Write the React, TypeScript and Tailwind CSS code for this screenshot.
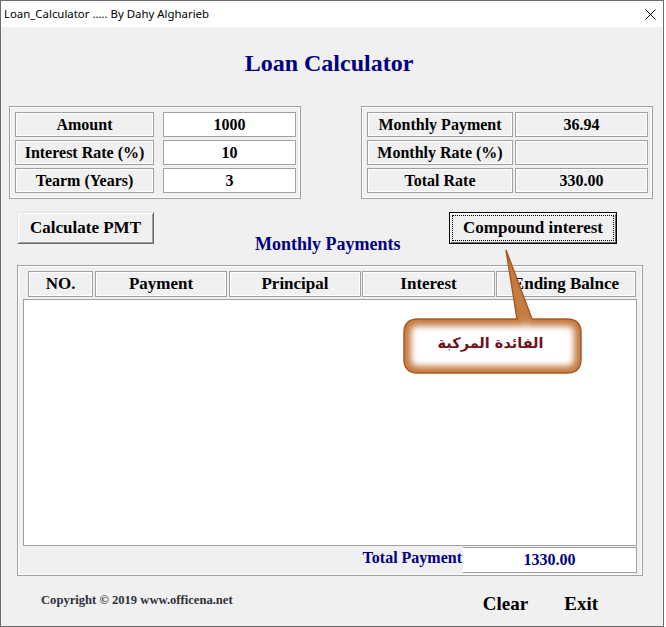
import React from "react";

const serif = { fontFamily: '"Liberation Serif", "Times New Roman", serif' };

function LabelCell({ text, w }: { text: string; w: string }) {
  return (
    <div
      className={`${w} h-[25px] flex items-center justify-center border border-[#a0a0a0] bg-[#f0f0f0] shadow-[inset_0_0_0_1px_#ffffff] text-[16px] font-bold text-black`}
    >
      {text}
    </div>
  );
}

function ValueCell({ text, white }: { text: string; white?: boolean }) {
  return (
    <div
      className={`w-[133px] h-[25px] flex items-center justify-center border border-[#a0a0a0] text-[16px] font-bold text-black ${
        white ? "bg-white" : "bg-[#f0f0f0] shadow-[inset_0_0_0_1px_#ffffff]"
      }`}
    >
      {text}
    </div>
  );
}

function Callout() {
  const d =
    "M 18 74 H 117 L 106 5 L 132 74 H 167 Q 181 74 181 88 V 114 Q 181 128 167 128 H 18 Q 4 128 4 114 V 88 Q 4 74 18 74 Z";
  return (
    <div className="absolute left-[400px] top-[245px] w-[190px] h-[135px]">
      <svg width="190" height="135" viewBox="0 0 190 135">
        <defs>
          <clipPath id="bubble">
            <path d={d} />
          </clipPath>
          <filter id="soft" x="-20%" y="-20%" width="140%" height="140%">
            <feGaussianBlur stdDeviation="3" />
          </filter>
        </defs>
        <path d={d} fill="#ffffff" />
        <g clipPath="url(#bubble)">
          <path d={d} fill="none" stroke="#c47c42" strokeWidth="14" filter="url(#soft)" />
        </g>
        <path d={d} fill="none" stroke="#a8591f" strokeWidth="1.5" />
      </svg>
      <div
        dir="rtl"
        className="absolute left-[2px] top-[72px] w-[177px] h-[54px] flex items-center justify-center text-[14.5px] font-bold text-[#74101c]"
        style={{ fontFamily: '"DejaVu Sans", "Noto Sans", sans-serif' }}
      >
        الفائدة المركبة
      </div>
    </div>
  );
}

export default function App() {
  const headers: { label: string; cls: string }[] = [
    { label: "NO.", cls: "w-[65px] ml-[5px]" },
    { label: "Payment", cls: "w-[132px] ml-[2px]" },
    { label: "Principal", cls: "w-[132px] ml-[2px]" },
    { label: "Interest", cls: "w-[133px] ml-[1px]" },
    { label: "Ending Balnce", cls: "w-[140px] ml-[1px]" },
  ];

  return (
    <div className="relative w-[666px] h-[627px] bg-white" style={serif}>
      <div className="w-[664px] h-[627px] border border-[#6b6b6b] bg-[#f0f0f0] flex flex-col">
        {/* title bar */}
        <div className="h-[26px] bg-white flex items-center justify-between pl-[3px] pr-[7px]">
          <span
            className="text-[11.4px] text-black"
            style={{ fontFamily: '"Noto Sans", "Open Sans", sans-serif' }}
          >
            Loan_Calculator ..... By Dahy Algharieb
          </span>
          <svg width="11" height="11" viewBox="0 0 11 11">
            <path d="M0.5 0.5 L10.5 10.5 M10.5 0.5 L0.5 10.5" stroke="#000" strokeWidth="1" />
          </svg>
        </div>

        <div className="mt-[22px] pr-[6px] text-center text-[24px] leading-[28px] font-bold text-[#000080]">
          Loan Calculator
        </div>

        {/* input / output panels */}
        <div className="mt-[29px] flex pl-[8px]">
          <div className="w-[292px] h-[93px] border border-[#a0a0a0] shadow-[inset_0_0_0_1px_#ffffff] pt-[5px] pl-[5px] flex flex-col gap-[3px]">
            <div className="flex gap-[9px]">
              <LabelCell text="Amount" w="w-[139px]" />
              <ValueCell text="1000" white />
            </div>
            <div className="flex gap-[9px]">
              <LabelCell text="Interest Rate (%)" w="w-[139px]" />
              <ValueCell text="10" white />
            </div>
            <div className="flex gap-[9px]">
              <LabelCell text="Tearm (Years)" w="w-[139px]" />
              <ValueCell text="3" white />
            </div>
          </div>
          <div className="ml-[60px] w-[292px] h-[93px] border border-[#a0a0a0] shadow-[inset_0_0_0_1px_#ffffff] pt-[5px] pl-[5px] flex flex-col gap-[3px]">
            <div className="flex gap-[2px]">
              <LabelCell text="Monthly Payment" w="w-[146px]" />
              <ValueCell text="36.94" />
            </div>
            <div className="flex gap-[2px]">
              <LabelCell text="Monthly Rate (%)" w="w-[146px]" />
              <ValueCell text="" />
            </div>
            <div className="flex gap-[2px]">
              <LabelCell text="Total Rate" w="w-[146px]" />
              <ValueCell text="330.00" />
            </div>
          </div>
        </div>

        {/* buttons row */}
        <div className="mt-[13px] h-[32px] flex items-start pl-[16px]">
          <button className="w-[137px] h-[32px] flex items-center justify-center border border-[#e3e3e3] border-r-[#696969] border-b-[#696969] bg-[#f0f0f0] shadow-[inset_1px_1px_0_#ffffff,inset_-1px_-1px_0_#a0a0a0] text-[17px] font-bold text-black">
            Calculate PMT
          </button>
          <div className="ml-[101px] w-[194px] pt-[22px] text-[18px] leading-[20px] font-bold text-[#000080]">
            Monthly Payments
          </div>
          <button className="w-[168px] h-[32px] flex items-center justify-center border border-black bg-[#f0f0f0] shadow-[inset_1px_1px_0_#ffffff,inset_-1px_-1px_0_#696969] outline-1 outline-dotted outline-black -outline-offset-4 text-[17px] font-bold text-black">
            Compound interest
          </button>
        </div>

        {/* table frame */}
        <div className="mt-[21px] ml-[16px] w-[626px] h-[311px] border border-[#a0a0a0] shadow-[inset_0_0_0_1px_#ffffff] pt-[5px] pl-[5px] flex flex-col">
          <div className="flex h-[26px]">
            {headers.map((h) => (
              <div
                key={h.label}
                className={`${h.cls} h-[26px] flex items-center justify-center border border-[#a0a0a0] bg-[#f0f0f0] shadow-[inset_0_0_0_1px_#ffffff] text-[17px] font-bold text-black`}
              >
                {h.label}
              </div>
            ))}
          </div>
          <div className="mt-[2px] w-[614px] h-[247px] border border-[#a0a0a0] bg-white" />
          <div className="mt-[1px] w-[614px] h-[26px] flex items-center justify-end">
            <span className="pr-[1px] pb-[4px] text-[16px] font-bold text-[#000080]">Total Payment</span>
            <div className="w-[174px] h-[26px] flex items-center justify-center border border-l-0 border-[#a0a0a0] bg-white text-[16px] font-bold text-[#000080]">
              1330.00
            </div>
          </div>
        </div>

        {/* footer */}
        <div className="flex items-start justify-between pt-[17px] pl-[40px] pr-[65px]">
          <span className="text-[12.6px] leading-[15px] font-bold text-[#30303c]">
            Copyright © 2019 www.officena.net
          </span>
          <div className="flex gap-[36px] text-[19px] leading-[22px] font-bold text-black">
            <span>Clear</span>
            <span>Exit</span>
          </div>
        </div>
      </div>
      <Callout />
    </div>
  );
}
